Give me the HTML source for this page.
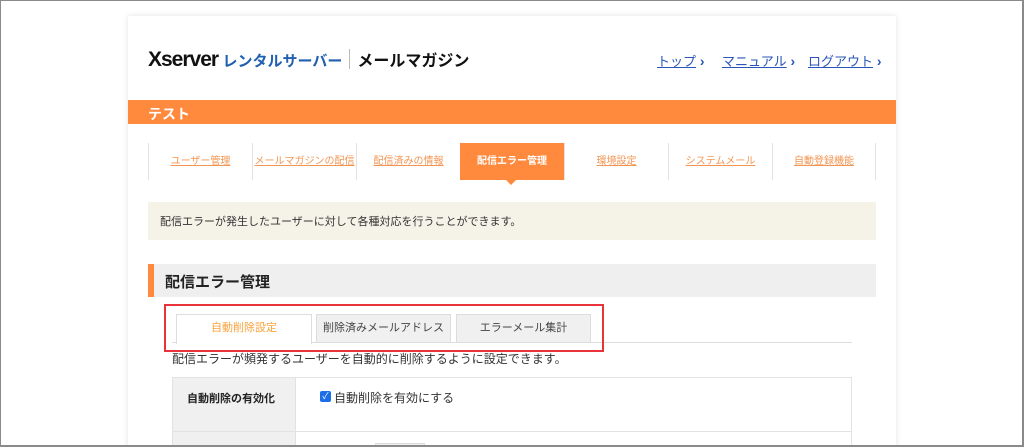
<!DOCTYPE html>
<html><head><meta charset="utf-8"><style>
*{margin:0;padding:0;box-sizing:border-box}
html,body{width:1024px;height:447px;overflow:hidden}
body{background:#fff;font-family:"Liberation Sans","Noto Sans CJK JP",sans-serif;position:relative}
.frame{position:absolute;left:0;top:0;width:1024px;height:447px;border:1px solid #8a8a8a;border-right:2px solid #8a8a8a;border-bottom:2px solid #8a8a8a;z-index:10;pointer-events:none}
.card{position:absolute;left:128px;top:16px;width:768px;height:431px;background:#fff;box-shadow:0 0 6px rgba(0,0,0,.12)}
.a{position:absolute;white-space:nowrap}
.logo{left:148px;top:47px;font-weight:bold}
.links a{color:#2a55b8;text-decoration:underline;font-size:13px}
.links b{color:#2a55b8;font-size:14px}
.bar{left:128px;top:100px;width:768px;height:24px;background:#ff8a3d;color:#fff;font-weight:bold;font-size:14px;padding:4px 0 0 20px}
.nav{left:148px;top:143px;height:37px;display:flex}
.nav div{width:104px;height:37px;border-left:1px solid #e2e2e2;text-align:center;font-size:10px;line-height:37px;color:#f39552;text-decoration:underline}
.nav div.act{background:#ff8a3d;color:#fff;text-decoration:none;font-weight:bold;position:relative;border-left:none}
.nav div.act:after{content:"";position:absolute;left:46px;top:37px;border:5px solid transparent;border-top:5px solid #ff8a3d}
.info{left:148px;top:202px;width:728px;height:38px;background:#f5f3e8;font-size:11px;color:#333;padding:11px 12px}
.h{left:148px;top:264px;width:728px;height:33px;background:#efefef;border-left:6px solid #ff8a3d;font-size:15px;font-weight:bold;color:#222;padding:7px 11px}
.tab{top:314px;height:29px;border:1px solid #ddd;background:#f0f0f0;font-size:11px;color:#444;text-align:center;line-height:27px}
</style></head><body>
<div class="frame"></div>
<div class="card"></div>
<div class="a logo"><span style="font-size:21px;color:#111;letter-spacing:-1px">Xserver</span> <span style="font-size:15px;color:#2060b0">レンタルサーバー</span><span style="display:inline-block;width:1px;height:20px;background:#bbb;margin:0 7px;vertical-align:-3px"></span><span style="font-size:16px;color:#111">メールマガジン</span></div>
<div class="a links" style="left:657px;top:51px"><a>トップ</a><b> ›</b></div>
<div class="a links" style="left:722px;top:51px"><a>マニュアル</a><b> ›</b></div>
<div class="a links" style="left:808px;top:51px"><a>ログアウト</a><b> ›</b></div>
<div class="a bar">テスト</div>
<div class="a nav"><div>ユーザー管理</div><div>メールマガジンの配信</div><div>配信済みの情報</div><div class="act">配信エラー管理</div><div>環境設定</div><div>システムメール</div><div style="border-right:1px solid #e2e2e2">自動登録機能</div></div>
<div class="a info">配信エラーが発生したユーザーに対して各種対応を行うことができます。</div>
<div class="a h">配信エラー管理</div>
<div class="a" style="left:172px;top:342px;width:680px;height:1px;background:#ddd"></div>
<div class="a tab" style="left:176px;width:136px;background:#fff;border-bottom:none;height:30px;color:#f7a23c">自動削除設定</div>
<div class="a tab" style="left:316px;width:135px">削除済みメールアドレス</div>
<div class="a tab" style="left:456px;width:135px">エラーメール集計</div>
<div class="a" style="left:164px;top:304px;width:440px;height:48px;border:2px solid #e8333a"></div>
<div class="a" style="left:172px;top:350px;font-size:12px;color:#333">配信エラーが頻発するユーザーを自動的に削除するように設定できます。</div>
<div class="a" style="left:172px;top:377px;width:680px;height:80px;border:1px solid #e2e2e2"></div>
<div class="a" style="left:172px;top:377px;width:124px;height:80px;background:#f0f0f0;border:1px solid #e2e2e2"></div>
<div class="a" style="left:172px;top:431px;width:680px;height:1px;background:#e2e2e2"></div>
<div class="a" style="left:187px;top:390px;font-size:11px;font-weight:bold;color:#222">自動削除の有効化</div>
<div class="a" style="left:320px;top:391px;width:11px;height:11px;background:#1a6ee8;border-radius:2px;color:#fff;font-size:9px;line-height:11px;text-align:center">✓</div>
<div class="a" style="left:334px;top:389px;font-size:12px;color:#333">自動削除を有効にする</div>
<div class="a" style="left:375px;top:443px;width:50px;height:4px;background:#f0f0f0;border:1px solid #ddd"></div>
</body></html>
